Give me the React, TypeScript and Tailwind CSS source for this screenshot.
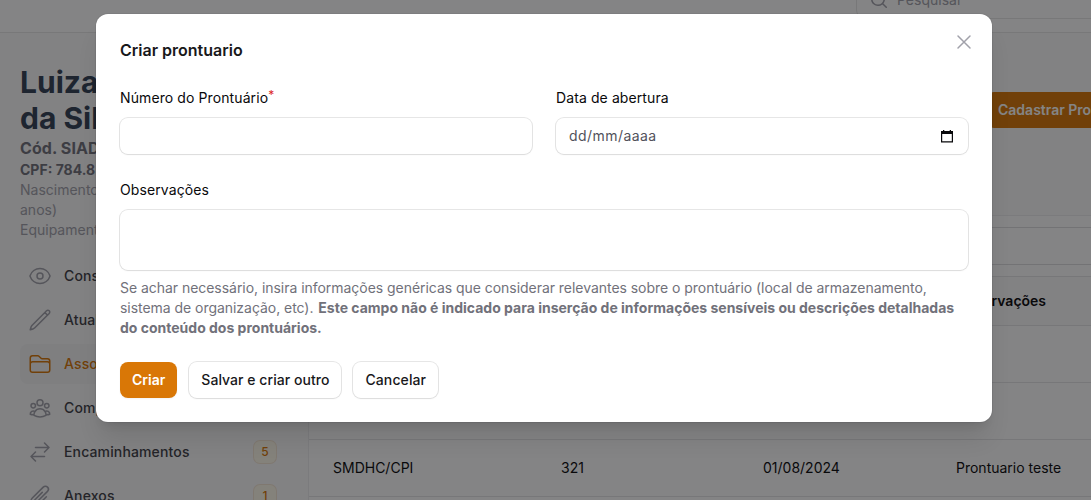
import type { ReactNode } from "react";
import type { IconType } from "react-icons";
import {
  HiOutlineArrowsRightLeft,
  HiOutlineEye,
  HiOutlineFolder,
  HiOutlinePaperClip,
  HiOutlinePencil,
  HiOutlineUserGroup,
} from "react-icons/hi2";

interface NavItem {
  label: string;
  icon: IconType;
  active?: boolean;
  badge?: number;
}

const navItems: NavItem[] = [
  { label: "Consultar", icon: HiOutlineEye },
  { label: "Atualizar", icon: HiOutlinePencil },
  { label: "Associar", icon: HiOutlineFolder, active: true },
  { label: "Composição", icon: HiOutlineUserGroup },
  { label: "Encaminhamentos", icon: HiOutlineArrowsRightLeft, badge: 5 },
  { label: "Anexos", icon: HiOutlinePaperClip, badge: 1 },
];

const rows = [
  ["", "", "", ""],
  ["", "", "", ""],
  ["SMDHC/CPI", "321", "01/08/2024", "Prontuario teste"],
  ["", "", "", ""],
];

const columns = "grid grid-cols-[240px_202px_193px_200px]";

function TopBar() {
  return (
    <header className="-mt-8 flex h-[65px] shrink-0 items-center border-b border-[#e6e6e7] bg-white pl-[857px]">
      <div className="-mt-px flex h-9 w-64 shrink-0 items-center gap-2 rounded-lg bg-white pl-3 ring-1 ring-[#09090b]/10">
        <svg className="size-5 text-[#a1a1aa]" viewBox="0 0 20 20" fill="currentColor">
          <path
            fillRule="evenodd"
            clipRule="evenodd"
            d="M9 3.5a5.5 5.5 0 1 0 0 11 5.5 5.5 0 0 0 0-11ZM2 9a7 7 0 1 1 12.452 4.391l3.328 3.329a.75.75 0 1 1-1.06 1.06l-3.329-3.328A7 7 0 0 1 2 9Z"
          />
        </svg>
        <span className="text-sm text-[#a1a1aa]">Pesquisar</span>
      </div>
    </header>
  );
}

function Sidebar() {
  return (
    <aside className="w-[308px] shrink-0 pt-[31px] pl-5">
      <h1 className="text-3xl font-bold text-[#334155]">
        Luiza
        <br />
        da Silva
      </h1>
      <p className="text-base font-bold tracking-[0.1px] text-[#71717a]">Cód. SIAD</p>
      <p className="text-sm font-bold text-[#71717a]">CPF: 784.8</p>
      <p className="text-sm text-[#a1a1aa]">
        Nascimento
        <br />
        anos)
      </p>
      <p className="text-sm text-[#a1a1aa]">Equipamento</p>
      <nav className="mt-4 flex flex-col gap-1">
        {navItems.map(({ label, icon: Icon, active, badge }) => (
          <div
            key={label}
            className={`mr-[23px] flex h-10 items-center gap-3 rounded-lg px-2 text-sm font-medium tracking-[0.14px] ${
              active ? "bg-[#f4f4f5] text-[#d97706]" : "text-[#3f3f46]"
            }`}
          >
            <Icon className={`size-6 shrink-0 ${active ? "text-[#d97706]" : "text-[#a1a1aa]"}`} />
            <span className="flex-1">{label}</span>
            {badge !== undefined && (
              <span className="mr-px flex h-[22px] w-[22px] items-center justify-center rounded-md bg-[#fffbeb] text-xs font-medium text-[#d97706] ring-1 ring-[#d97706]/15">
                {badge}
              </span>
            )}
          </div>
        ))}
      </nav>
    </aside>
  );
}

function RecordsTable() {
  return (
    <section className="w-[900px] rounded-t-xl border border-[#ededee] bg-white">
      <div className="flex justify-end border-b border-[#e4e4e7] px-6 py-[11px]">
        <div className="h-[38px] w-64 rounded-lg border border-[#dcdcde]" />
      </div>
      <div className={`${columns} h-12 items-center bg-[#fafafa] text-sm font-semibold text-[#09090b]`}>
        <span className="col-start-4 pl-3">Observações</span>
      </div>
      {rows.map((row, i) => (
        <div key={i} className={`${columns} h-[57px] items-center border-t border-[#e4e4e7] text-sm text-[#09090b]`}>
          <span className="pl-6">{row[0]}</span>
          <span className="pl-3">{row[1]}</span>
          <span className="pl-3">{row[2]}</span>
          <span className="pl-3">{row[3]}</span>
        </div>
      ))}
    </section>
  );
}

function Field({ label, required, children }: { label: string; required?: boolean; children: ReactNode }) {
  return (
    <div className="flex flex-col gap-2">
      <span className="h-6 text-sm leading-6 font-normal tracking-[0.1px] text-[#09090b]">
        {label}
        {required && <sup className="-top-1 text-[12px] text-[#dc2626]">*</sup>}
      </span>
      {children}
    </div>
  );
}

const control = "rounded-lg bg-white shadow-xs ring-1 ring-[#09090b]/10";

function CreateModal() {
  return (
    <div className="w-[896px] rounded-xl bg-white p-6 shadow-xl ring-1 ring-[#09090b]/5">
      <div className="flex h-6 items-center justify-between">
        <h2 className="text-base leading-6 font-semibold text-[#18181b]">Criar prontuario</h2>
        <svg
          className="-mt-4 -mr-2 size-6 text-[#a1a1aa]"
          viewBox="0 0 24 24"
          fill="none"
          stroke="currentColor"
          strokeWidth="1.5"
          strokeLinecap="round"
        >
          <path d="M6 18 18 6M6 6l12 12" />
        </svg>
      </div>
      <div className="mt-6 grid grid-cols-2 gap-6">
        <Field label="Número do Prontuário" required>
          <div className={`${control} h-9`} />
        </Field>
        <Field label="Data de abertura">
          <div className={`${control} flex h-9 items-center justify-between pr-[15px] pl-[13px] text-sm text-[#52525b]`}>
            <span className="tracking-[0.44px]">dd/mm/aaaa</span>
            <svg className="h-[13px] w-3" viewBox="0 0 12 13" fill="none">
              <path d="M0.6 1.5h10.8v10.4H0.6z" stroke="#09090b" strokeWidth="1.2" />
              <path d="M0 1h12v3H0zM2 0h1.3v1.5H2zM8.7 0H10v1.5H8.7z" fill="#09090b" />
            </svg>
          </div>
        </Field>
        <div className="col-span-2">
          <Field label="Observações">
            <div className={`${control} h-[60px]`} />
            <p className="text-sm text-[#71717a]">
              <span className="tracking-[-0.04px]">
                Se achar necessário, insira informações genéricas que considerar relevantes sobre o prontuário (local de
                armazenamento, sistema de organização, etc).{" "}
              </span>
              <strong className="ml-px font-bold">
                Este campo não é indicado para inserção de informações sensíveis ou descrições detalhadas do conteúdo
                dos prontuários.
              </strong>
            </p>
          </Field>
        </div>
      </div>
      <div className="mt-6 flex gap-3 text-sm font-medium">
        <button className="h-9 rounded-lg bg-[#d97706] px-3 font-semibold text-white shadow-xs">Criar</button>
        <button className={`${control} h-9 px-3 tracking-[0.05px] text-[#18181b]`}>Salvar e criar outro</button>
        <button className={`${control} h-9 px-3 tracking-[0.1px] text-[#18181b]`}>Cancelar</button>
      </div>
    </div>
  );
}

export default function App() {
  return (
    <div className="relative h-[500px] w-[1091px] overflow-hidden bg-[#fafafa] font-['Inter',sans-serif]">
      <TopBar />
      <div className="flex">
        <Sidebar />
        <main className="w-[783px] shrink-0 pt-[59px]">
          <div className="mb-[87px] flex pl-[678px]">
            <div className="h-9 shrink-0 rounded-lg bg-[#d97706] px-3 text-sm leading-9 font-semibold whitespace-nowrap text-white">
              Cadastrar Prontuário
            </div>
          </div>
          <RecordsTable />
        </main>
      </div>
      <div className="absolute inset-0 bg-[#09090b]/50 pt-3.5 pl-24">
        <CreateModal />
      </div>
    </div>
  );
}
